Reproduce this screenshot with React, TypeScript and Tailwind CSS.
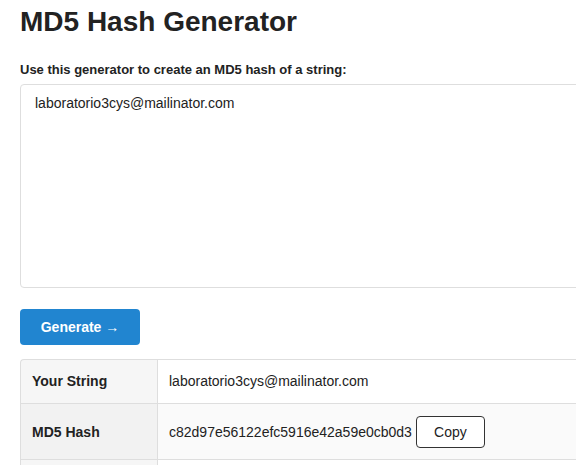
import React from 'react';

const input = 'laboratorio3cys@mailinator.com';
const hash = 'c82d97e56122efc5916e42a59e0cb0d3';

export default function App() {
  return (
    <div className="w-[576px] h-[465px] overflow-hidden bg-white font-['Liberation_Sans',Arial,sans-serif] text-[#222]">
      <div className="w-[760px] pl-5 pt-[5px]">
        {/* Header */}
        <h1 className="text-[28px] leading-[34px] font-bold text-[#222]">MD5 Hash Generator</h1>

        <p className="mt-[22px] text-[13px] leading-[18px] font-bold text-[#222]">
          Use this generator to create an MD5 hash of a string:
        </p>

        {/* Input */}
        <textarea
          className="mt-[5px] block w-full h-[204px] resize-none rounded border border-[#dedede] px-[14px] py-[8px] text-[14px] leading-[20px] text-[#222] outline-none"
          defaultValue={input}
        />

        <button className="mt-[21px] h-9 w-[120px] rounded bg-[#2185d0] text-[14px] font-bold text-white">
          Generate <span className="font-normal">→</span>
        </button>

        {/* Result */}
        <table className="mt-[14px] w-full border-separate border-spacing-0 text-[14px] leading-[20px]">
          <tbody>
            <tr>
              <td className="w-[137px] rounded-tl border-t border-l border-[#dedede] bg-[#f6f6f6] pl-[11px] pr-3 pt-[11px] pb-3 font-bold">Your String</td>
              <td className="border-t border-l border-r border-[#dedede] pl-[11px] pr-3 pt-[11px] pb-3">{input}</td>
            </tr>
            <tr>
              <td className="border-t border-l border-[#dedede] bg-[#f2f2f2] pl-[11px] pr-3 pt-3 pb-[11px] font-bold">MD5 Hash</td>
              <td className="border-t border-l border-r border-[#dedede] bg-[#fafafa] pl-[11px] pr-3 pt-3 pb-[11px]">
                <div className="flex items-center gap-1">
                  <span>{hash}</span>
                  <button className="h-8 w-[69px] rounded border border-[#333] bg-white text-[14px] text-[#222]">Copy</button>
                </div>
              </td>
            </tr>
            <tr>
              <td className="h-12 border-t border-l border-[#dedede] bg-[#f6f6f6] px-3 py-3"></td>
              <td className="border-t border-l border-r border-[#dedede] px-3 py-3"></td>
            </tr>
          </tbody>
        </table>
      </div>
    </div>
  );
}
